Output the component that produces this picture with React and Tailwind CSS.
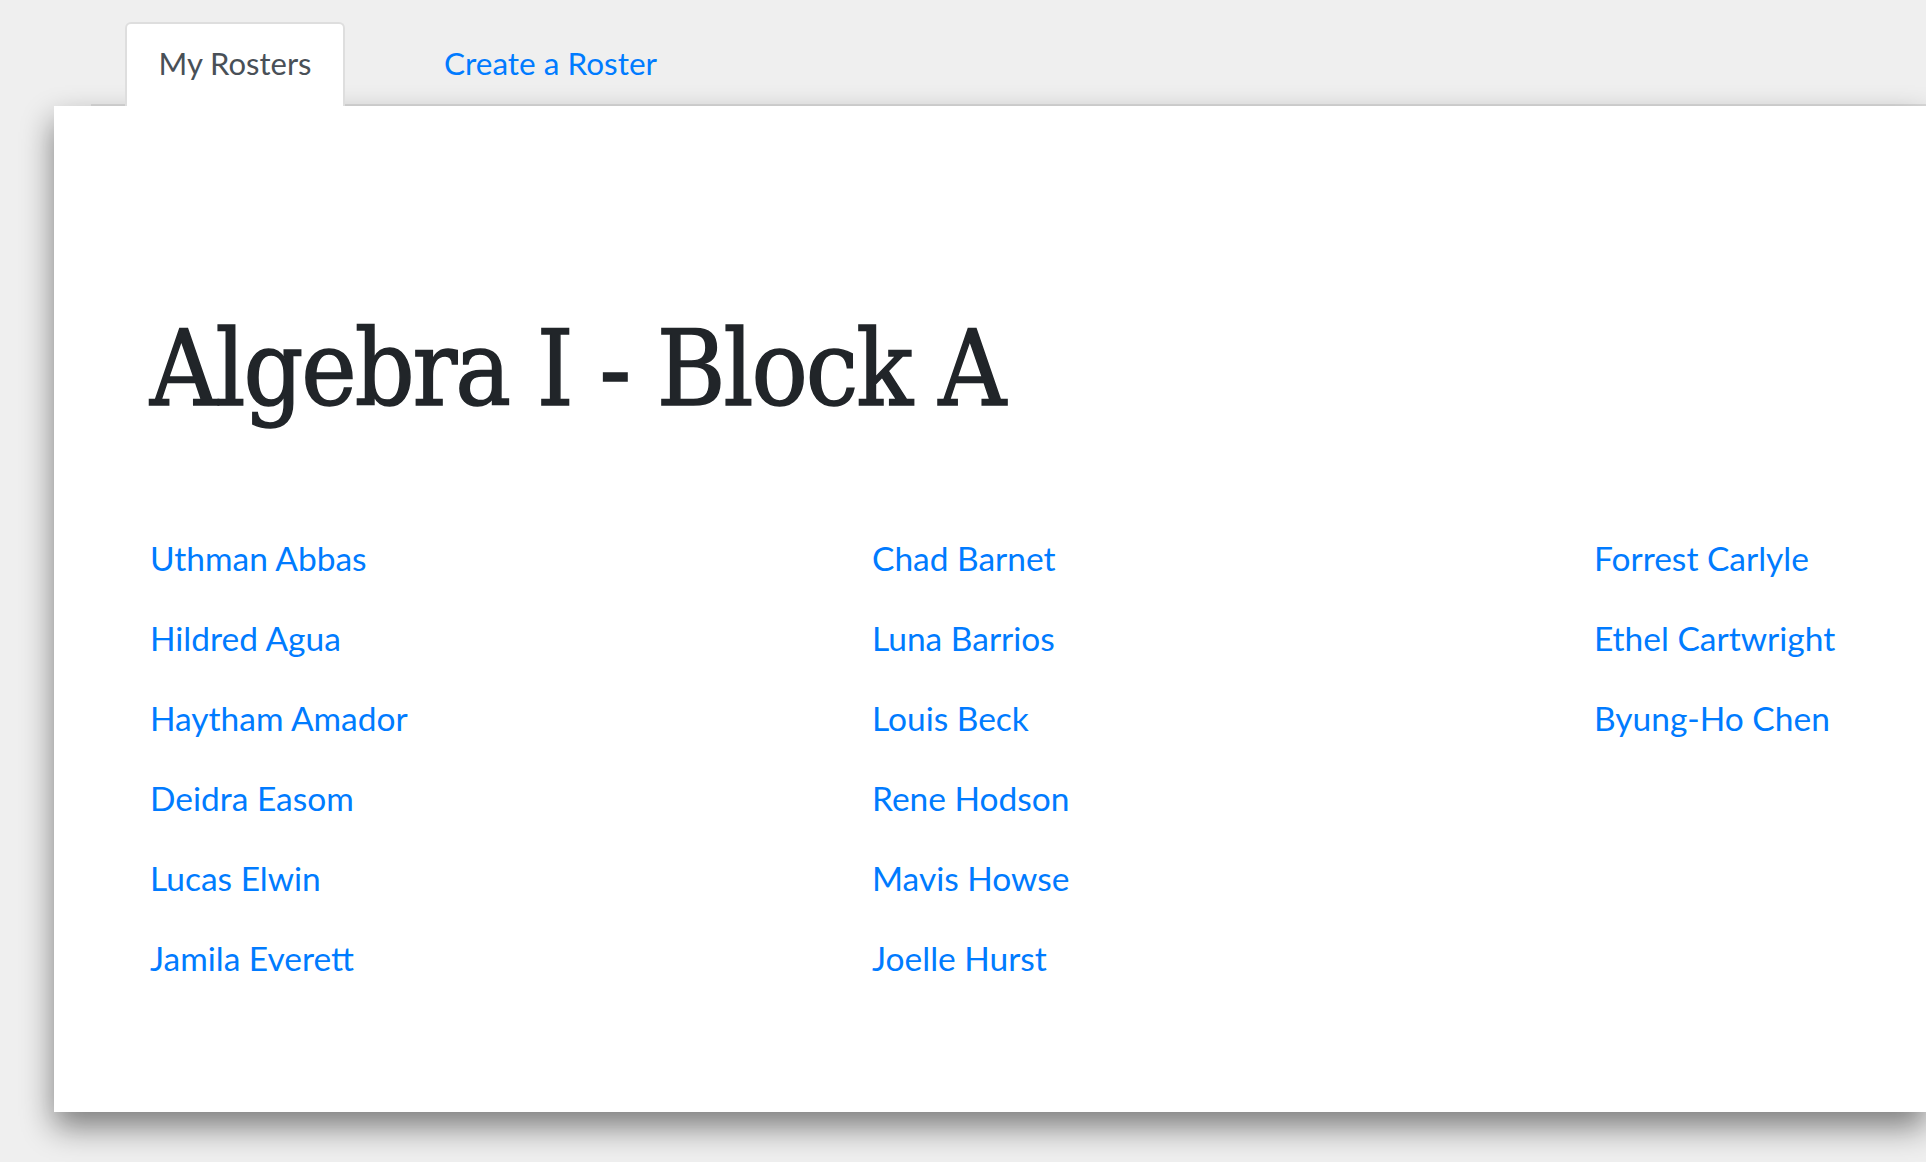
import React from 'react';

const columns = [
  ['Uthman Abbas', 'Hildred Agua', 'Haytham Amador', 'Deidra Easom', 'Lucas Elwin', 'Jamila Everett'],
  ['Chad Barnet', 'Luna Barrios', 'Louis Beck', 'Rene Hodson', 'Mavis Howse', 'Joelle Hurst'],
  ['Forrest Carlyle', 'Ethel Cartwright', 'Byung-Ho Chen'],
];

const sans = "font-['Lato','Noto_Sans',sans-serif]";

export default function App() {
  return (
    <div className="min-h-[1162px] w-full overflow-hidden bg-[#efefef]">
      {/* tabs */}
      <nav className={`ml-[91px] flex items-end border-b-2 border-[#dcdcdc] pt-[22px] ${sans}`}>
        <a
          href="#"
          className="-mb-[2px] ml-[34px] flex h-[84px] w-[220px] items-start justify-center rounded-t-[6px] border-2 border-b-0 border-[#dedede] bg-white pt-[16px] text-[31px] text-[#495057]"
        >
          My Rosters
        </a>
        <a
          href="#"
          className="ml-[99px] flex h-[82px] items-start pt-[18px] text-[31.5px] text-[#007bff]"
        >
          Create a Roster
        </a>
      </nav>

      {/* roster card */}
      <section className="ml-[54px] h-[1006px] bg-white pl-[96px] shadow-[0_15px_30px_rgba(0,0,0,0.48)]">
        <h1 className="pt-[211px] font-['DejaVu_Serif',serif] text-[104px] leading-none tracking-[-2px] text-[#212529] font-stretch-condensed [-webkit-text-stroke:1.5px_#212529]">
          Algebra I - Block A
        </h1>

        <div className={`mt-[120px] grid grid-cols-[repeat(3,722px)] ${sans}`}>
          {columns.map((col, i) => (
            <ul key={i} className="flex flex-col gap-y-[46px]">
              {col.map((name) => (
                <li key={name}>
                  <a href="#" className="block text-[33.5px] leading-[34px] text-[#007bff]">
                    {name}
                  </a>
                </li>
              ))}
            </ul>
          ))}
        </div>
      </section>
    </div>
  );
}
